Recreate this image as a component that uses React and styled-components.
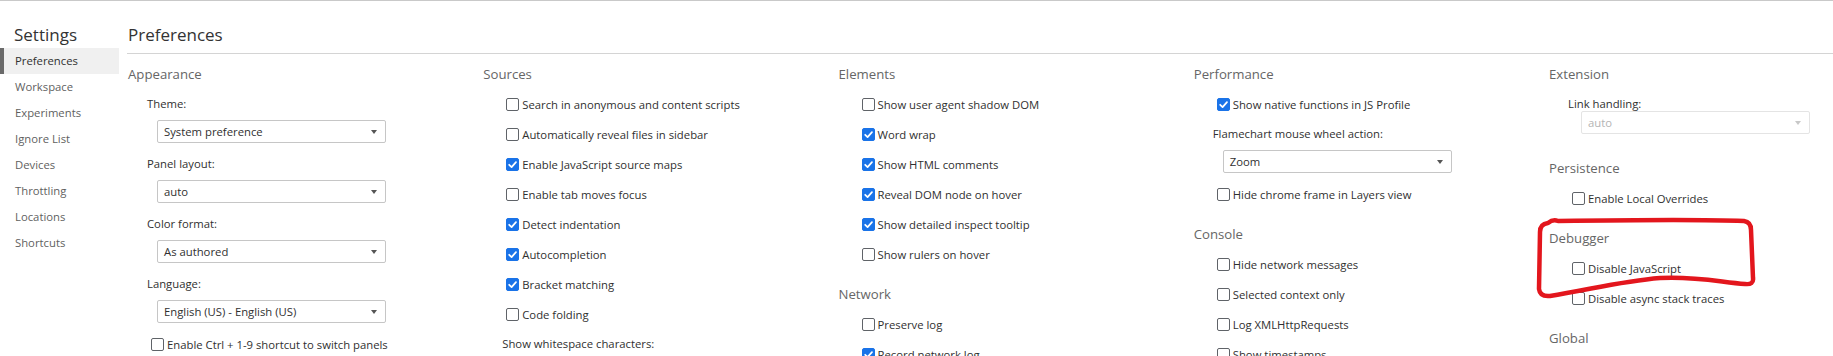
import React from 'react';
import styled, { createGlobalStyle } from 'styled-components';

const GlobalStyle = createGlobalStyle`
  html, body {
    margin: 0;
    padding: 0;
    background: #fff;
    overflow: hidden;
  }
  body {
    font-family: "Open Sans", "Noto Sans", sans-serif;
    color: #303030;
  }
`;

const Page = styled.div`
  position: relative;
  display: flex;
  width: 1833px;
  height: 356px;
  box-sizing: border-box;
  border-top: 1px solid #c9c9c9;
  overflow: hidden;
`;

const Sidebar = styled.nav`
  width: 119px;
  flex-shrink: 0;
`;

const SidebarTitle = styled.div`
  height: 47px;
  box-sizing: border-box;
  padding: 21px 0 0 14px;
  font-size: 17px;
  line-height: 26px;
  color: #333;
`;

const NavItem = styled.div`
  height: 26px;
  line-height: 26px;
  padding-left: 15px;
  font-size: 11.3px;
  color: ${p => (p.$active ? '#303030' : '#5f5f5f')};
  background: ${p => (p.$active ? '#f0f0f0' : 'transparent')};
  box-shadow: ${p => (p.$active ? 'inset 4px 0 0 #6a6a6a' : 'none')};
`;

const Main = styled.main`
  flex: 1;
  min-width: 0;
  margin-left: 8px;
`;

const MainTitle = styled.div`
  height: 53px;
  box-sizing: border-box;
  padding: 21px 0 0 1px;
  font-size: 17px;
  line-height: 26px;
  color: #333;
  border-bottom: 1px solid #d4d4d4;
`;

const Columns = styled.div`
  display: grid;
  grid-template-columns: repeat(5, 355.25px);
  padding: 5px 0 0 1px;
`;

const Column = styled.div`
  display: flex;
  flex-direction: column;
`;

const Section = styled.section`
  & + & {
    margin-top: 10px;
  }
`;

const SectionTitle = styled.div`
  height: 30px;
  line-height: 30px;
  font-size: 13.2px;
  color: #666;
`;

const CheckRow = styled.label`
  display: flex;
  align-items: center;
  height: 30px;
  margin-top: ${p => p.$offset || 0}px;
  padding-left: 23px;
  font-size: 11.3px;
  color: #303030;
  white-space: nowrap;
`;

const Box = styled.span`
  width: 13px;
  height: 13px;
  box-sizing: border-box;
  margin-right: 3px;
  border-radius: 2px;
  border: 1px solid ${p => (p.$checked ? '#1a73e8' : '#5f6368')};
  background: ${p => (p.$checked ? '#1a73e8' : '#fff')};
  display: flex;
  align-items: center;
  justify-content: center;
`;

const FieldLabel = styled.div`
  padding-left: 19px;
  font-size: 11.3px;
  color: #303030;
  height: ${p => (p.$compact ? '15px' : '30px')};
  line-height: ${p => (p.$compact ? '15px' : '30px')};
  margin-top: ${p => (p.$compact ? '7px' : '0')};
  white-space: nowrap;
`;

const SelectBox = styled.div`
  position: relative;
  width: 229px;
  height: 23px;
  box-sizing: border-box;
  margin: ${p => (p.$compact ? '0 0 9px 32px' : '1px 0 6px 29px')};
  padding-left: 6px;
  border: 1px solid ${p => (p.$disabled ? '#e4e4e4' : '#c6c6c6')};
  border-radius: 2px;
  font-size: 11.3px;
  line-height: 21px;
  color: ${p => (p.$disabled ? '#b4b4b4' : '#303030')};

  &::after {
    content: '';
    position: absolute;
    right: 8px;
    top: 9px;
    border-left: 3.5px solid transparent;
    border-right: 3.5px solid transparent;
    border-top: 4px solid ${p => (p.$disabled ? '#c8c8c8' : '#555')};
  }
`;

const Annotation = styled.svg`
  position: absolute;
  top: -1px;
  left: 0;
  pointer-events: none;
`;

const Check = () => (
  <svg width="11" height="11" viewBox="0 0 12 12">
    <path d="M2.4 6.3 L5 8.8 L9.8 3.4" fill="none" stroke="#fff" strokeWidth="1.9" strokeLinecap="round" strokeLinejoin="round" />
  </svg>
);

function Checkbox({ label, checked, offset }) {
  return (
    <CheckRow $offset={offset}>
      <Box $checked={checked}>{checked && <Check />}</Box>
      {label}
    </CheckRow>
  );
}

function Field({ label, value, compact, disabled }) {
  return (
    <div>
      <FieldLabel $compact={compact}>{label}</FieldLabel>
      <SelectBox $compact={compact} $disabled={disabled}>{value}</SelectBox>
    </div>
  );
}

const navItems = ['Preferences', 'Workspace', 'Experiments', 'Ignore List', 'Devices', 'Throttling', 'Locations', 'Shortcuts'];

const columns = [
  [
    {
      title: 'Appearance',
      items: [
        { select: true, label: 'Theme:', value: 'System preference' },
        { select: true, label: 'Panel layout:', value: 'auto' },
        { select: true, label: 'Color format:', value: 'As authored' },
        { select: true, label: 'Language:', value: 'English (US) - English (US)' },
        { label: 'Enable Ctrl + 1-9 shortcut to switch panels', offset: 2 },
      ],
    },
  ],
  [
    {
      title: 'Sources',
      items: [
        { label: 'Search in anonymous and content scripts' },
        { label: 'Automatically reveal files in sidebar' },
        { label: 'Enable JavaScript source maps', checked: true },
        { label: 'Enable tab moves focus' },
        { label: 'Detect indentation', checked: true },
        { label: 'Autocompletion', checked: true },
        { label: 'Bracket matching', checked: true },
        { label: 'Code folding' },
        { select: true, label: 'Show whitespace characters:', value: 'Trailing' },
      ],
    },
  ],
  [
    {
      title: 'Elements',
      items: [
        { label: 'Show user agent shadow DOM' },
        { label: 'Word wrap', checked: true },
        { label: 'Show HTML comments', checked: true },
        { label: 'Reveal DOM node on hover', checked: true },
        { label: 'Show detailed inspect tooltip', checked: true },
        { label: 'Show rulers on hover' },
      ],
    },
    {
      title: 'Network',
      items: [
        { label: 'Preserve log' },
        { label: 'Record network log', checked: true },
      ],
    },
  ],
  [
    {
      title: 'Performance',
      items: [
        { label: 'Show native functions in JS Profile', checked: true },
        { select: true, label: 'Flamechart mouse wheel action:', value: 'Zoom' },
        { label: 'Hide chrome frame in Layers view' },
      ],
    },
    {
      title: 'Console',
      items: [
        { label: 'Hide network messages' },
        { label: 'Selected context only' },
        { label: 'Log XMLHttpRequests' },
        { label: 'Show timestamps' },
      ],
    },
  ],
  [
    {
      title: 'Extension',
      items: [{ select: true, compact: true, disabled: true, label: 'Link handling:', value: 'auto' }],
    },
    {
      title: 'Persistence',
      items: [{ label: 'Enable Local Overrides' }],
    },
    {
      title: 'Debugger',
      items: [{ label: 'Disable JavaScript' }, { label: 'Disable async stack traces' }],
    },
    {
      title: 'Global',
      items: [],
    },
  ],
];

export default function App() {
  return (
    <>
      <GlobalStyle />
      <Page>
        <Sidebar>
          <SidebarTitle>Settings</SidebarTitle>
          {navItems.map((name, i) => (
            <NavItem key={name} $active={i === 0}>{name}</NavItem>
          ))}
        </Sidebar>
        <Main>
          <MainTitle>Preferences</MainTitle>
          <Columns>
            {columns.map((sections, ci) => (
              <Column key={ci}>
                {sections.map(sec => (
                  <Section key={sec.title}>
                    <SectionTitle>{sec.title}</SectionTitle>
                    {sec.items.map(item =>
                      item.select ? (
                        <Field key={item.label} {...item} />
                      ) : (
                        <Checkbox key={item.label} label={item.label} checked={item.checked} offset={item.offset} />
                      )
                    )}
                  </Section>
                ))}
              </Column>
            ))}
          </Columns>
        </Main>
        <Annotation width="1833" height="356" viewBox="0 0 1833 356">
          <path
            d="M1540 232 Q1540 224 1548 223 Q1553 219 1558 221 C1620 220 1700 219 1744 221 Q1751 222 1751 230 L1753 278 Q1754 285 1745 284 C1720 282 1695 276 1660 278 C1622 281 1588 290 1550 296 Q1540 297 1539 289 Z"
            fill="none"
            stroke="#e3161d"
            strokeWidth="4.5"
            strokeLinejoin="round"
          />
        </Annotation>
      </Page>
    </>
  );
}
